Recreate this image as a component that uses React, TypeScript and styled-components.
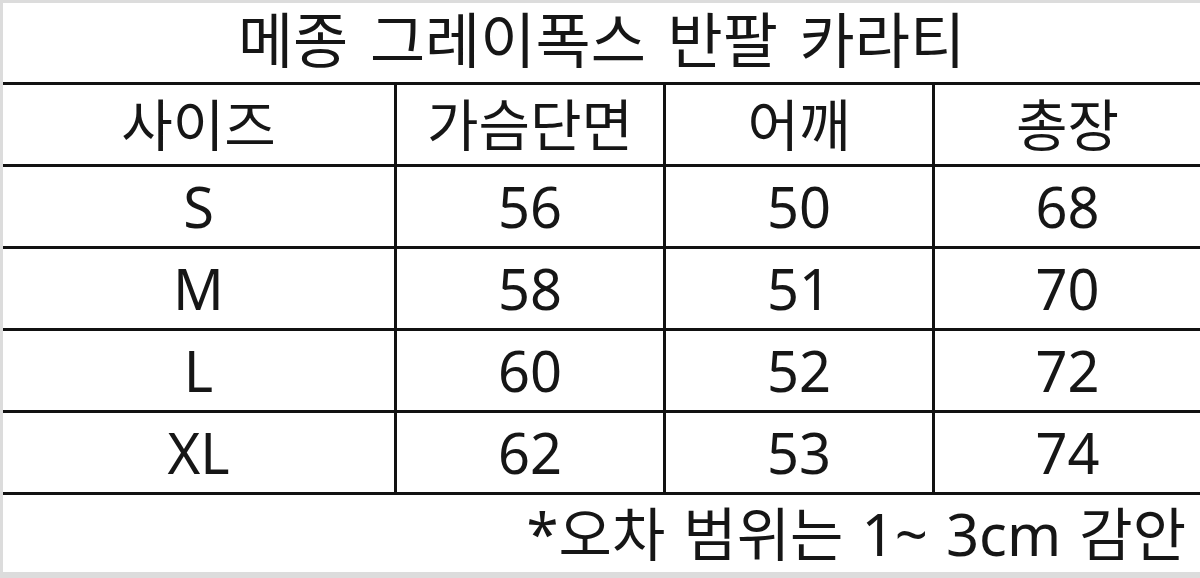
import styled, { createGlobalStyle } from "styled-components";

const GlobalStyle = createGlobalStyle`
  html, body {
    margin: 0;
    padding: 0;
    background: #dcdcdc;
  }
  body {
    font-family: "Noto Sans", "Noto Sans CJK KR", sans-serif;
    color: #161616;
  }
`;

type SizeRow = {
  size: string;
  chest: number;
  shoulder: number;
  length: number;
};

const rows: SizeRow[] = [
  { size: "S", chest: 56, shoulder: 50, length: 68 },
  { size: "M", chest: 58, shoulder: 51, length: 70 },
  { size: "L", chest: 60, shoulder: 52, length: 72 },
  { size: "XL", chest: 62, shoulder: 53, length: 74 },
];

const headers = ["사이즈", "가슴단면", "어깨", "총장"];

const App = () => {
  return (
    <>
      <GlobalStyle />
      <Page>
        <Sheet>
          <Title>메종 그레이폭스 반팔 카라티</Title>
          <Table>
            {headers.map((label, i) => (
              <Cell key={label} $last={i === 3}>
                {label}
              </Cell>
            ))}
            {rows.map((row) =>
              [row.size, row.chest, row.shoulder, row.length].map((value, i) => (
                <Cell key={`${row.size}-${i}`} $last={i === 3}>
                  {value}
                </Cell>
              ))
            )}
          </Table>
          <Note>*오차 범위는 1~ 3cm 감안</Note>
        </Sheet>
      </Page>
    </>
  );
};

export default App;

const Page = styled.div`
  width: 1200px;
  height: 578px;
  padding: 3px 0 6px 3px;
  box-sizing: border-box;
  overflow: hidden;
`;

const Sheet = styled.div`
  display: flex;
  flex-direction: column;
  height: 100%;
  background: #ffffff;
`;

const Title = styled.div`
  height: 79px;
  display: flex;
  align-items: center;
  justify-content: center;
  padding-bottom: 5px;
  box-sizing: border-box;
  font-size: 60px;
  word-spacing: 6px;
  line-height: 72px;
  white-space: nowrap;
`;

const Table = styled.div`
  display: grid;
  grid-template-columns: 394px 269px 269px 1fr;
  grid-auto-rows: 82px;
  border-top: 3px solid #111;
`;

const Cell = styled.div<{ $last?: boolean }>`
  display: flex;
  align-items: center;
  justify-content: center;
  border-bottom: 3px solid #111;
  border-right: ${({ $last }) => ($last ? "none" : "3px solid #111")};
  font-size: 56px;
  line-height: 1.2;
  white-space: nowrap;
`;

const Note = styled.div`
  flex: 1;
  display: flex;
  align-items: center;
  justify-content: flex-end;
  padding-right: 14px;
  font-size: 58px;
  word-spacing: 3px;
  line-height: 1.2;
  white-space: nowrap;
`;
